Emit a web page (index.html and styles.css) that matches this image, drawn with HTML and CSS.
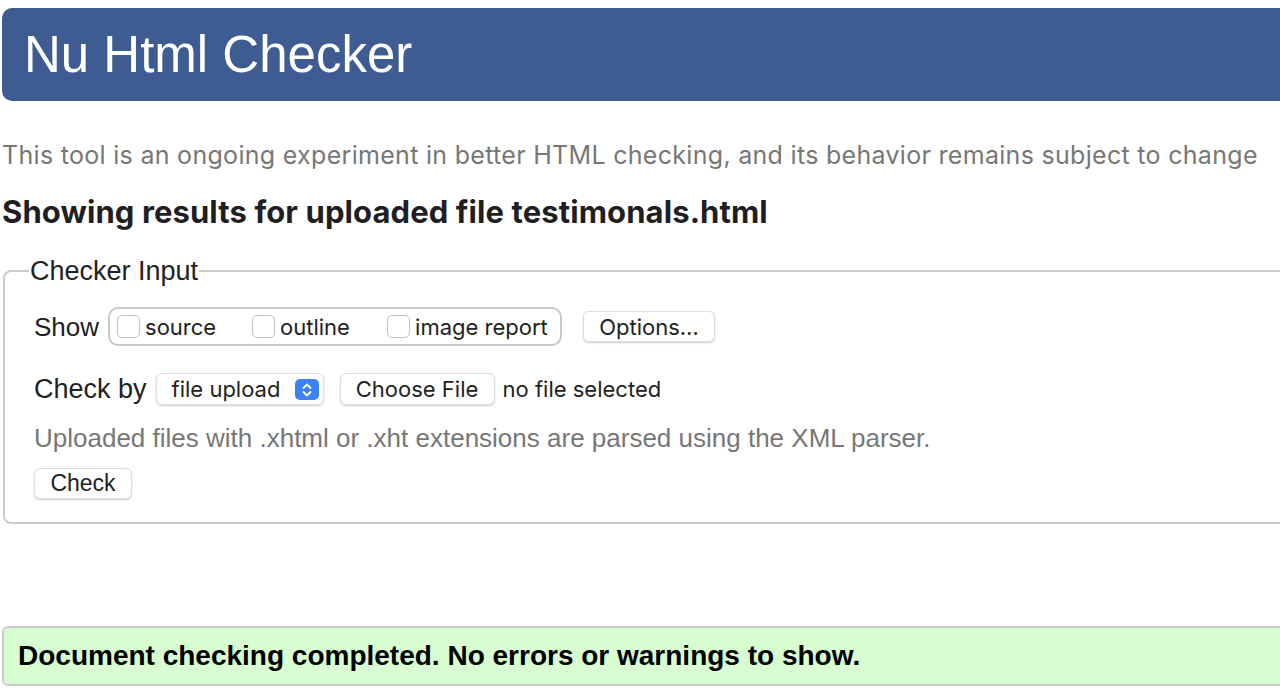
FILE: index.html
```html
<!DOCTYPE html>
<html>
<head>
<meta charset="utf-8">
<link rel="stylesheet" href="styles.css">
</head>
<body>
<div class="page">
  <h1 class="banner">Nu Html Checker</h1>
  <p class="intro">This tool is an ongoing experiment in better HTML checking, and its behavior remains subject to change</p>
  <h2 class="results">Showing results for uploaded file testimonals.html</h2>
  <fieldset class="input">
    <legend class="legend">Checker Input</legend>
    <div class="row show-row">
      <span class="label">Show</span>
      <div class="showbox">
        <label class="opt"><span class="cb"></span>source</label>
        <label class="opt"><span class="cb"></span>outline</label>
        <label class="opt"><span class="cb"></span>image report</label>
      </div>
      <button class="btn options">Options…</button>
    </div>
    <div class="row check-row">
      <span class="label">Check by</span>
      <div class="select">file upload<span class="arrows"><svg width="14" height="18" viewBox="0 0 14 18"><path d="M3.5 7 L7 3.5 L10.5 7 M3.5 11 L7 14.5 L10.5 11" fill="none" stroke="#fff" stroke-width="1.8" stroke-linecap="round" stroke-linejoin="round"/></svg></span></div>
      <button class="btn choose">Choose File</button>
      <span class="nofile">no file selected</span>
    </div>
    <p class="hint">Uploaded files with .xhtml or .xht extensions are parsed using the XML parser.</p>
    <button class="btn check">Check</button>
  </fieldset>
  <div class="success">Document checking completed. No errors or warnings to show.</div>
</div>
</body>
</html>
```
FILE: styles.css
```css
html, body { margin: 0; padding: 0; overflow: hidden; background: #fff; }
.page { width: 1310px; padding: 8px 0 0 2px; font-family: Inter, "Noto Sans", sans-serif; color: #1d1d1f; }
.banner {
  margin: 0; height: 93px; box-sizing: border-box; padding: 0 0 0 22px;
  background: #3e5c91; color: #fff; border-radius: 10px 0 0 10px;
  font: 400 51px/93px "Liberation Sans", Arial, sans-serif;
}
.intro { margin: 38px 0 0; font-size: 25px; line-height: 32px; letter-spacing: 0.3px; color: #777; }
.results { margin: 23px 0 0; font-size: 31px; line-height: 36px; font-weight: 700; letter-spacing: 0.1px; color: #1f1f23; }
.input {
  margin: 26px 0 0 1px; padding: 0 0 23px 29px; border: 2px solid #ccc; border-radius: 8px;
}
.legend { padding: 0 1px; margin-left: -5px; font: 400 27px/30px "Liberation Sans", Arial, sans-serif; color: #222; }
.row { display: flex; align-items: center; }
.show-row { margin-top: 21px; }
.label { font: 400 26px/30px "Liberation Sans", Arial, sans-serif; color: #222; margin-right: 9px; }
.check-row .label { font-size: 27px; margin-right: 9px; }
.showbox { display: flex; align-items: center; height: 39px; width: 454px; box-sizing: border-box; border: 2px solid #c8c8c8; border-radius: 10px; padding: 0 0 0 7px; }
.opt { display: flex; align-items: center; font-size: 22px; color: #222; }
.opt:nth-child(1), .opt:nth-child(2) { width: 135px; }
.cb { width: 23px; height: 23px; box-sizing: border-box; border: 1px solid #c4c4c4; border-radius: 5px; margin-right: 5px; background: #fff; }
.btn {
  font-family: Inter, "Noto Sans", sans-serif; font-size: 22px; color: #222; background: #fff;
  border: 1px solid #dedede; border-radius: 6px; box-shadow: 0 1px 2px rgba(0,0,0,0.2);
  height: 31px; padding: 0; cursor: default; line-height: 1;
}
.options { margin-left: 21px; width: 132px; }
.check-row { margin-top: 27px; }
.select { position: relative; display: flex; align-items: center; height: 32px; width: 168px; box-sizing: border-box; padding-left: 15px; border: 1px solid #dedede; border-radius: 6px; box-shadow: 0 1px 2px rgba(0,0,0,0.2); font-size: 22px; color: #222; }
.arrows { position: absolute; right: 4px; top: 5px; width: 24px; height: 21px; background: #3b82f6; border-radius: 5px; display: flex; align-items: center; justify-content: center; }
.choose { margin-left: 16px; height: 32px; width: 155px; }
.nofile { margin-left: 8px; font-size: 22px; color: #222; }
.hint { margin: 18px 0 0; font: 400 26px/30px "Liberation Sans", Arial, sans-serif; color: #777; }
.check { margin-top: 15px; width: 98px; height: 31px; font: 400 23px/1 "Liberation Sans", Arial, sans-serif; }
.success {
  margin: 102px 0 0; height: 60px; box-sizing: border-box; padding-left: 14px;
  background: #d7fdd0; border: 2px solid #ccc; border-radius: 6px 0 0 6px;
  font: 700 28px/56px "Liberation Sans", Arial, sans-serif; color: #000;
}
```
